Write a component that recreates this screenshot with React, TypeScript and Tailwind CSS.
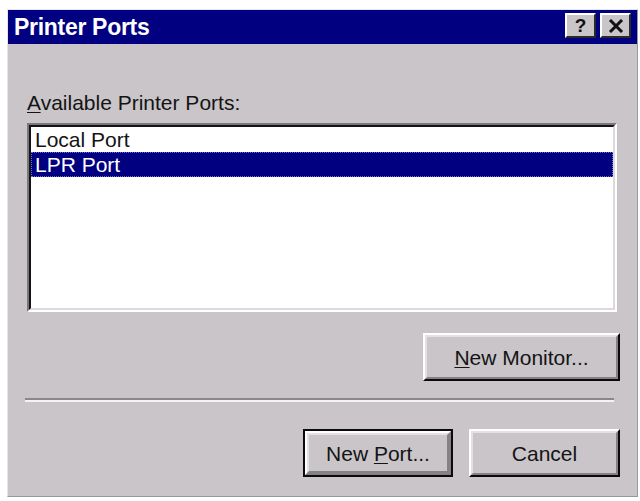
import React from "react";

const font = { fontFamily: '"Liberation Sans", Arial, sans-serif' };

function Btn({ children, def, w }: { children: React.ReactNode; def?: boolean; w: string }) {
  const inner = (
    <div className="h-full border-2 border-t-white border-l-white border-r-[#0a0a0a] border-b-[#0a0a0a]">
      <div className="h-full flex items-center justify-center border-2 border-t-[#e4e1e4] border-l-[#e4e1e4] border-r-[#858285] border-b-[#858285] text-[21px] leading-none text-[#141414]">
        {children}
      </div>
    </div>
  );
  return (
    <div className={`${w} h-[48px] ${def ? "border-2 border-[#0a0a0a]" : ""}`}>
      {def ? (
        <div className="h-full border-2 border-t-white border-l-white border-r-[#858285] border-b-[#858285]">
          <div className="h-full flex items-center justify-center border-2 border-t-[#e4e1e4] border-l-[#e4e1e4] border-r-[#858285] border-b-[#858285] text-[21px] leading-none text-[#141414]">
            {children}
          </div>
        </div>
      ) : (
        inner
      )}
    </div>
  );
}

function TitleBtn({ children }: { children: React.ReactNode }) {
  return (
    <div className="w-[31px] h-[25px] bg-[#c9c5c9] border-2 border-t-white border-l-white border-r-[#2a2a2a] border-b-[#2a2a2a] flex items-center justify-center">
      {children}
    </div>
  );
}

export default function App() {
  return (
    <div className="w-[640px] h-[501px] bg-white pt-[9px] pl-[7px]" style={font}>
      <div className="w-[631px] h-[488px] flex flex-col bg-[#c9c5c9] border border-t-[#e8e5e8] border-l-[#e8e5e8] border-r-[#9a979a] border-b-[#9a979a]">
        <div className="h-[34px] bg-[#000080] flex justify-between pl-[6px] pr-[6px]">
          <div className="text-white font-bold text-[23px] leading-[34px] tracking-[-0.3px]">Printer Ports</div>
          <div className="flex gap-[4px] pt-[3px]">
            <TitleBtn>
              <span className="text-[19px] font-bold leading-none text-[#111]">?</span>
            </TitleBtn>
            <TitleBtn>
              <svg width="16" height="14" viewBox="0 0 16 14">
                <path d="M2 1 L14 13 M14 1 L2 13" stroke="#111" strokeWidth="3" />
              </svg>
            </TitleBtn>
          </div>
        </div>
        <div className="flex-1 flex flex-col pl-[19px] pr-[17px] pt-[47px]">
          <div className="text-[21px] leading-[24px] text-[#141414]">
            <span className="underline decoration-1 underline-offset-2">A</span>vailable Printer Ports:
          </div>
          <div className="mt-[8px] mr-[3px] h-[189px] border-2 border-t-[#7a777a] border-l-[#7a777a] border-r-white border-b-white">
            <div className="h-full bg-white border-2 border-t-[#141414] border-l-[#141414] border-r-[#dcd9dc] border-b-[#dcd9dc] text-[21px]">
              <div className="h-[25px] leading-[26px] pl-[4px] text-[#141414]">Local Port</div>
              <div className="h-[25px] leading-[24px] pl-[3px] bg-[#000080] text-white border border-dotted border-[#6a6ae0]">LPR Port</div>
            </div>
          </div>
          <div className="mt-[21px] self-end">
            <Btn w="w-[197px]">
              <span>
                <span className="underline decoration-1 underline-offset-2">N</span>ew Monitor...
              </span>
            </Btn>
          </div>
          <div className="mt-[17px] ml-[-2px] mr-[6px] h-[4px] border-t-2 border-t-[#8a878a] border-b-2 border-b-[#f4f2f4]" />
          <div className="mt-[27px] flex justify-end gap-[16px]">
            <Btn w="w-[150px]" def>
              <span>
                New <span className="underline decoration-1 underline-offset-2">P</span>ort...
              </span>
            </Btn>
            <Btn w="w-[151px]">Cancel</Btn>
          </div>
        </div>
      </div>
    </div>
  );
}
